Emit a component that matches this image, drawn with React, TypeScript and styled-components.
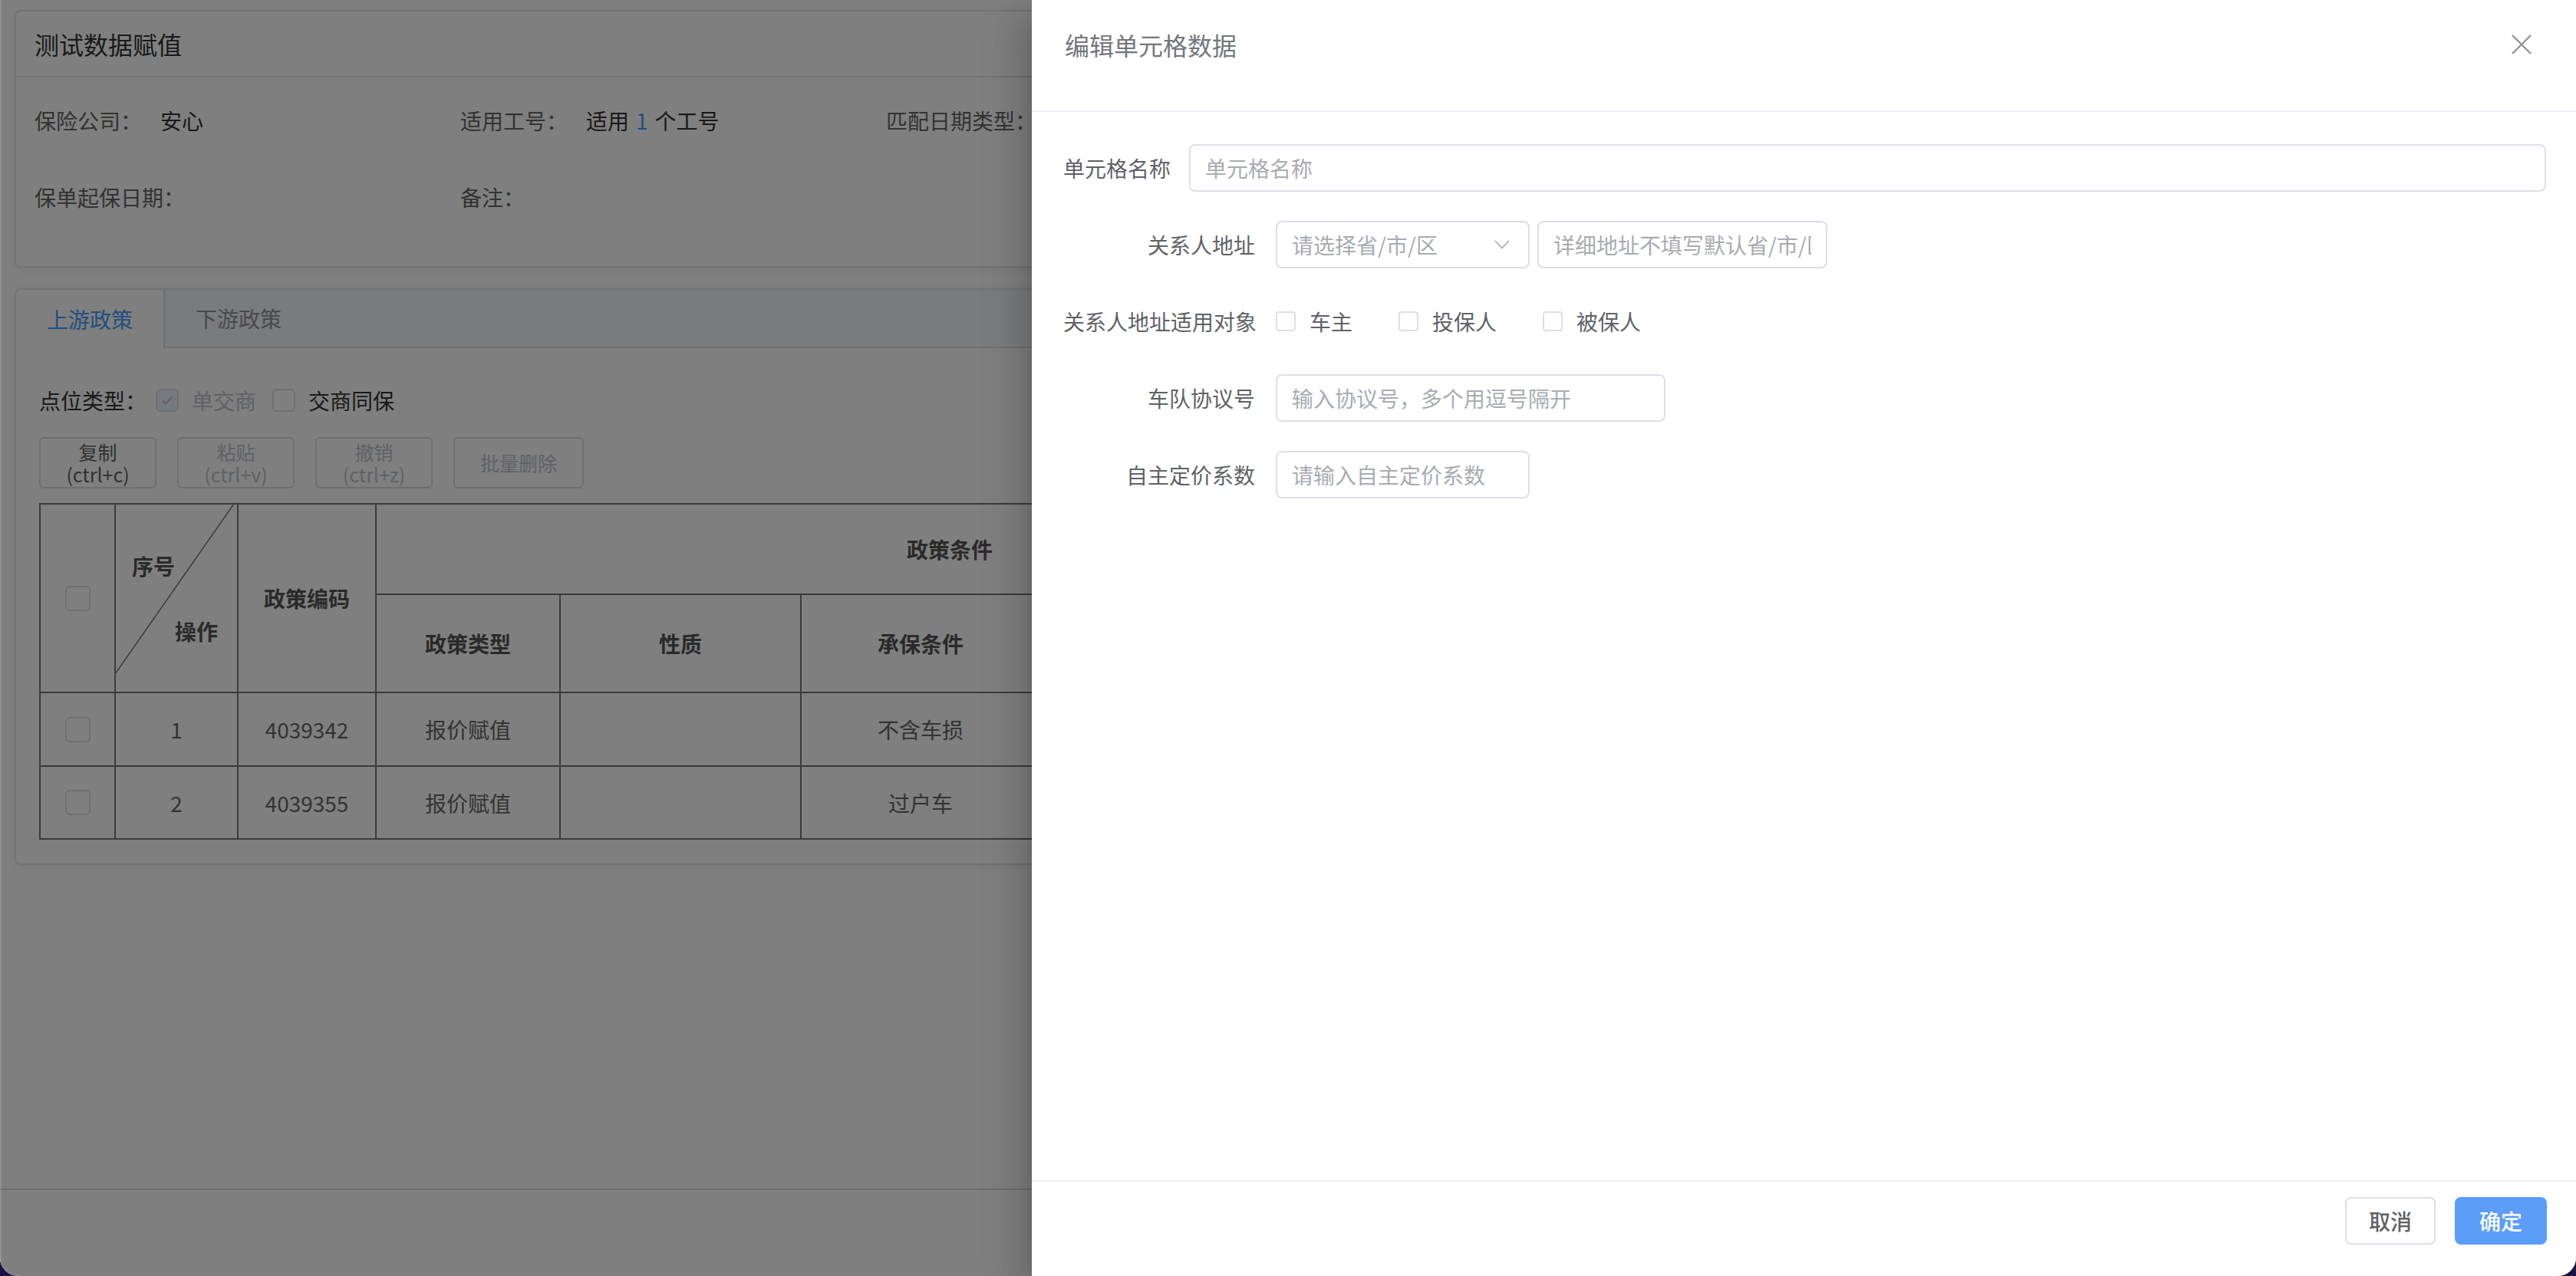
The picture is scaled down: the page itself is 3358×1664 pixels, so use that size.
import React from "react";
import styled, { createGlobalStyle } from "styled-components";

const FONT = `"Noto Sans CJK SC", "Noto Sans", "Liberation Sans", sans-serif`;

const GlobalStyle = createGlobalStyle`
  html, body { margin: 0; padding: 0; background: #1d1045; }
  body { font-family: ${FONT}; }
  * { box-sizing: border-box; }
`;

const Window = styled.div`
  position: relative;
  width: 3358px;
  height: 1664px;
  overflow: hidden;
  background: #fff;
  border-radius: 0 0 24px 24px;
  display: flex;
  flex-direction: column;
  font-family: ${FONT};
`;

const Main = styled.main`
  flex: 1;
  padding: 13px 19px 0;
  display: flex;
  flex-direction: column;
  gap: 27px;
`;

const PageFooter = styled.footer`
  height: 114px;
  border-top: 2px solid #dcdcdc;
  background: #fff;
`;

const Card = styled.section`
  border: 2px solid #e4e7ed;
  border-radius: 8px;
  background: #fff;
  box-shadow: 0 2px 12px rgba(0, 0, 0, 0.08);
  overflow: hidden;
`;

const CardHeader = styled.div`
  height: 86px;
  border-bottom: 2px solid #e4e7ed;
  display: flex;
  align-items: center;
  padding-left: 24px;
  font-size: 32px;
  color: #333;
`;

const InfoGrid = styled.div`
  display: grid;
  grid-template-columns: repeat(5, 555px);
  grid-auto-rows: 56px;
  row-gap: 44px;
  padding: 28px 24px 62px;
`;

const InfoItem = styled.div`
  display: flex;
  align-items: center;
  font-size: 28px;
  white-space: nowrap;
`;

const InfoLabel = styled.span`
  width: 164px;
  flex: none;
  color: #666;
`;

const InfoValue = styled.span`
  color: #333;
`;

const Blue = styled.span`
  color: #409eff;
  margin: 0 9px;
`;

const TabHeader = styled.div`
  height: 76px;
  display: flex;
  background: #f5f7fa;
  border-bottom: 2px solid #e4e7ed;
`;

const Tab = styled.div<{ $active?: boolean }>`
  height: ${(p) => (p.$active ? "76px" : "74px")};
  padding: 0 40px;
  display: flex;
  align-items: center;
  font-size: 28px;
  color: ${(p) => (p.$active ? "#409eff" : "#909399")};
  background: ${(p) => (p.$active ? "#fff" : "transparent")};
  border-right: 2px solid ${(p) => (p.$active ? "#dcdfe6" : "transparent")};
  margin-bottom: ${(p) => (p.$active ? "-2px" : "0")};
`;

const TabBody = styled.div`
  padding: 48px 30px 31px;
  display: flex;
  flex-direction: column;
`;

const CheckRow = styled.div`
  height: 40px;
  display: flex;
  align-items: center;
  font-size: 28px;
  color: #333;
`;

const RowTitle = styled.span`
  margin-right: 12px;
`;

const CheckLabel = styled.span<{ $disabled?: boolean }>`
  margin-left: 17px;
  margin-right: 21px;
  color: ${(p) => (p.$disabled ? "#c0c4cc" : "#333")};
`;

const Box = styled.span<{ $size: number; $disabled?: boolean }>`
  width: ${(p) => p.$size}px;
  height: ${(p) => p.$size}px;
  flex: none;
  display: inline-flex;
  vertical-align: middle;
  align-items: center;
  justify-content: center;
  border: 2px solid #dcdfe6;
  border-radius: ${(p) => (p.$size > 28 ? 6 : 4)}px;
  background: ${(p) => (p.$disabled ? "#edf2fc" : "#fff")};
`;

const CellCenter = styled.div`
  display: flex;
  align-items: center;
  justify-content: center;
`;

const Toolbar = styled.div`
  margin-top: 28px;
  display: flex;
  gap: 27px;
`;

const ToolButton = styled.button<{ $w: number; $disabled?: boolean }>`
  width: ${(p) => p.$w}px;
  height: 67px;
  padding: 0;
  border: 2px solid #dcdfe6;
  border-radius: 6px;
  background: #fff;
  font-family: ${FONT};
  font-size: 25px;
  line-height: 29px;
  white-space: pre-line;
  text-align: center;
  color: ${(p) => (p.$disabled ? "#c0c4cc" : "#606266")};
`;

const Table = styled.table`
  margin-top: 19px;
  border-collapse: collapse;
  table-layout: fixed;
  width: 3234px;
  font-size: 28px;
  color: #666;
`;

const Th = styled.th`
  border: 2px solid #777;
  font-weight: 600;
  color: #555;
  text-align: center;
  vertical-align: middle;
  padding: 0;
`;

const Td = styled.td`
  border: 2px solid #777;
  text-align: center;
  vertical-align: middle;
  padding: 0;
`;

const DiagCell = styled(Th)`
  position: relative;
`;

const DiagLine = styled.svg`
  position: absolute;
  left: 0;
  top: 0;
  width: 100%;
  height: 100%;
`;

const DiagLabels = styled.div`
  display: flex;
  flex-direction: column;
  gap: 45px;
  padding: 0 25px 0 21px;
  line-height: 40px;
`;

const DiagTop = styled.span`
  align-self: flex-start;
`;

const DiagBottom = styled.span`
  align-self: flex-end;
`;

const Overlay = styled.div`
  position: absolute;
  inset: 0;
  background: rgba(0, 0, 0, 0.5);
  box-shadow: inset 2px 0 0 rgba(255, 255, 255, 0.14);
  z-index: 10;
`;

const Drawer = styled.aside`
  position: absolute;
  top: 0;
  right: 0;
  bottom: 0;
  width: 2013px;
  background: #fff;
  z-index: 20;
  display: flex;
  flex-direction: column;
  box-shadow: 0 16px 20px -10px rgba(0, 0, 0, 0.2), 0 32px 48px 4px rgba(0, 0, 0, 0.14),
    0 12px 60px 10px rgba(0, 0, 0, 0.12);
`;

const DrawerHeader = styled.header`
  height: 146px;
  flex: none;
  border-bottom: 2px solid #ebeef5;
  padding: 38px 58px 0 43px;
  display: flex;
  align-items: flex-start;
  justify-content: space-between;
`;

const DrawerTitle = styled.span`
  font-size: 32px;
  line-height: 40px;
  color: #72767b;
`;

const CloseBtn = styled.span`
  height: 40px;
  display: flex;
  align-items: center;
`;

const DrawerBody = styled.div`
  flex: 1;
  padding: 42px 39px 0 41px;
  display: flex;
  flex-direction: column;
  gap: 38px;
`;

const FormRow = styled.div`
  height: 62px;
  display: flex;
  align-items: center;
`;

const FormLabel = styled.label<{ $w: number; $right?: boolean }>`
  width: ${(p) => p.$w}px;
  flex: none;
  font-size: 28px;
  color: #606266;
  text-align: ${(p) => (p.$right ? "right" : "left")};
  padding-right: ${(p) => (p.$right ? 27 : 0)}px;
  white-space: nowrap;
`;

const TextInput = styled.input<{ $w?: number }>`
  ${(p) => (p.$w ? `width: ${p.$w}px;` : "flex: 1;")}
  height: 62px;
  border: 2px solid #dcdfe6;
  border-radius: 8px;
  padding: 0 19px;
  font-family: ${FONT};
  font-size: 28px;
  color: #606266;
  background: #fff;
  outline: none;
  &::placeholder {
    color: #a8abb2;
  }
`;

const SelectBox = styled.div`
  width: 331px;
  height: 62px;
  border: 2px solid #dcdfe6;
  border-radius: 8px;
  padding: 0 24px 0 19px;
  display: flex;
  align-items: center;
  justify-content: space-between;
  font-size: 28px;
  color: #a8abb2;
  margin-right: 10px;
`;

const Options = styled.div`
  display: flex;
  align-items: center;
  gap: 60px;
`;

const Option = styled.span`
  display: flex;
  align-items: center;
  gap: 18px;
  font-size: 28px;
  color: #606266;
`;

const DrawerFooter = styled.footer`
  height: 125px;
  flex: none;
  border-top: 2px solid #ebeef5;
  padding: 20px 38px 0 0;
  display: flex;
  justify-content: flex-end;
  align-items: flex-start;
  gap: 25px;
`;

const FooterButton = styled.button<{ $primary?: boolean }>`
  height: 62px;
  width: ${(p) => (p.$primary ? 120 : 118)}px;
  border-radius: 8px;
  border: 2px solid ${(p) => (p.$primary ? "#5b9df9" : "#dcdfe6")};
  background: ${(p) => (p.$primary ? "#5b9df9" : "#fff")};
  color: ${(p) => (p.$primary ? "#fff" : "#606266")};
  font-family: ${FONT};
  font-size: 28px;
  font-weight: 500;
  padding: 0;
`;

const CheckMark = ({ color }: { color: string }) => (
  <svg width="16" height="14" viewBox="0 0 16 14">
    <path d="M2 7.5 L6 11.5 L14 2.5" fill="none" stroke={color} strokeWidth="2" />
  </svg>
);

const rows = [
  { no: "1", code: "4039342", type: "报价赋值", nature: "", cond: "不含车损" },
  { no: "2", code: "4039355", type: "报价赋值", nature: "", cond: "过户车" },
];

const tools = [
  { text: "复制\n(ctrl+c)", w: 153, disabled: false },
  { text: "粘贴\n(ctrl+v)", w: 153, disabled: true },
  { text: "撤销\n(ctrl+z)", w: 153, disabled: true },
  { text: "批量删除", w: 170, disabled: true },
];

export default function App() {
  return (
    <>
      <GlobalStyle />
      <Window>
        <Main>
          <Card>
            <CardHeader>测试数据赋值</CardHeader>
            <InfoGrid>
              <InfoItem>
                <InfoLabel>保险公司：</InfoLabel>
                <InfoValue>安心</InfoValue>
              </InfoItem>
              <InfoItem>
                <InfoLabel>适用工号：</InfoLabel>
                <InfoValue>
                  适用<Blue>1</Blue>个工号
                </InfoValue>
              </InfoItem>
              <InfoItem>
                <InfoLabel>匹配日期类型：</InfoLabel>
              </InfoItem>
              <InfoItem />
              <InfoItem />
              <InfoItem>
                <InfoLabel>保单起保日期：</InfoLabel>
              </InfoItem>
              <InfoItem>
                <InfoLabel>备注：</InfoLabel>
              </InfoItem>
            </InfoGrid>
          </Card>

          <Card>
            <TabHeader>
              <Tab $active>上游政策</Tab>
              <Tab>下游政策</Tab>
            </TabHeader>
            <TabBody>
              <CheckRow>
                <RowTitle>点位类型：</RowTitle>
                <Box $size={30} $disabled>
                  <CheckMark color="#c0c4cc" />
                </Box>
                <CheckLabel $disabled>单交商</CheckLabel>
                <Box $size={30} />
                <CheckLabel>交商同保</CheckLabel>
              </CheckRow>
              <Toolbar>
                {tools.map((t) => (
                  <ToolButton key={t.text} $w={t.w} $disabled={t.disabled}>
                    {t.text}
                  </ToolButton>
                ))}
              </Toolbar>
              <Table>
                <colgroup>
                  <col style={{ width: 98 }} />
                  <col style={{ width: 160 }} />
                  <col style={{ width: 180 }} />
                  <col style={{ width: 240 }} />
                  <col style={{ width: 314 }} />
                  <col style={{ width: 312 }} />
                  <col style={{ width: 630 }} />
                  <col />
                </colgroup>
                <thead>
                  <tr style={{ height: 118 }}>
                    <Th rowSpan={2}>
                      <CellCenter>
                        <Box $size={33} />
                      </CellCenter>
                    </Th>
                    <DiagCell rowSpan={2}>
                      <DiagLine viewBox="0 0 100 100" preserveAspectRatio="none">
                        <line
                          x1="97"
                          y1="0"
                          x2="0"
                          y2="90"
                          stroke="#777"
                          strokeWidth="1.5"
                          vectorEffect="non-scaling-stroke"
                        />
                      </DiagLine>
                      <DiagLabels>
                        <DiagTop>序号</DiagTop>
                        <DiagBottom>操作</DiagBottom>
                      </DiagLabels>
                    </DiagCell>
                    <Th rowSpan={2}>政策编码</Th>
                    <Th colSpan={4}>政策条件</Th>
                    <Th rowSpan={2}>政策内容</Th>
                  </tr>
                  <tr style={{ height: 128 }}>
                    <Th>政策类型</Th>
                    <Th>性质</Th>
                    <Th>承保条件</Th>
                    <Th>车辆类型</Th>
                  </tr>
                </thead>
                <tbody>
                  {rows.map((r, i) => (
                    <tr key={r.code} style={{ height: i === 0 ? 96 : 95 }}>
                      <Td>
                        <CellCenter>
                          <Box $size={33} />
                        </CellCenter>
                      </Td>
                      <Td>{r.no}</Td>
                      <Td>{r.code}</Td>
                      <Td>{r.type}</Td>
                      <Td>{r.nature}</Td>
                      <Td>{r.cond}</Td>
                      <Td />
                      <Td />
                    </tr>
                  ))}
                </tbody>
              </Table>
            </TabBody>
          </Card>
        </Main>
        <PageFooter />

        <Overlay />

        <Drawer>
          <DrawerHeader>
            <DrawerTitle>编辑单元格数据</DrawerTitle>
            <CloseBtn>
              <svg width="26" height="26" viewBox="0 0 26 26">
                <path d="M1 1 L25 25 M25 1 L1 25" stroke="#909399" strokeWidth="2.4" fill="none" />
              </svg>
            </CloseBtn>
          </DrawerHeader>
          <DrawerBody>
            <FormRow>
              <FormLabel $w={164}>单元格名称</FormLabel>
              <TextInput placeholder="单元格名称" />
            </FormRow>
            <FormRow>
              <FormLabel $w={277} $right>
                关系人地址
              </FormLabel>
              <SelectBox>
                <span>请选择省/市/区</span>
                <svg width="20" height="12" viewBox="0 0 20 12">
                  <path d="M1 1 L10 10.5 L19 1" fill="none" stroke="#a8abb2" strokeWidth="1.6" />
                </svg>
              </SelectBox>
              <TextInput $w={378} placeholder="详细地址不填写默认省/市/区" />
            </FormRow>
            <FormRow>
              <FormLabel $w={277} $right>
                关系人地址适用对象
              </FormLabel>
              <Options>
                <Option>
                  <Box $size={26} />
                  车主
                </Option>
                <Option>
                  <Box $size={26} />
                  投保人
                </Option>
                <Option>
                  <Box $size={26} />
                  被保人
                </Option>
              </Options>
            </FormRow>
            <FormRow>
              <FormLabel $w={277} $right>
                车队协议号
              </FormLabel>
              <TextInput $w={508} placeholder="输入协议号，多个用逗号隔开" />
            </FormRow>
            <FormRow>
              <FormLabel $w={277} $right>
                自主定价系数
              </FormLabel>
              <TextInput $w={331} placeholder="请输入自主定价系数" />
            </FormRow>
          </DrawerBody>
          <DrawerFooter>
            <FooterButton>取消</FooterButton>
            <FooterButton $primary>确定</FooterButton>
          </DrawerFooter>
        </Drawer>
      </Window>
    </>
  );
}
